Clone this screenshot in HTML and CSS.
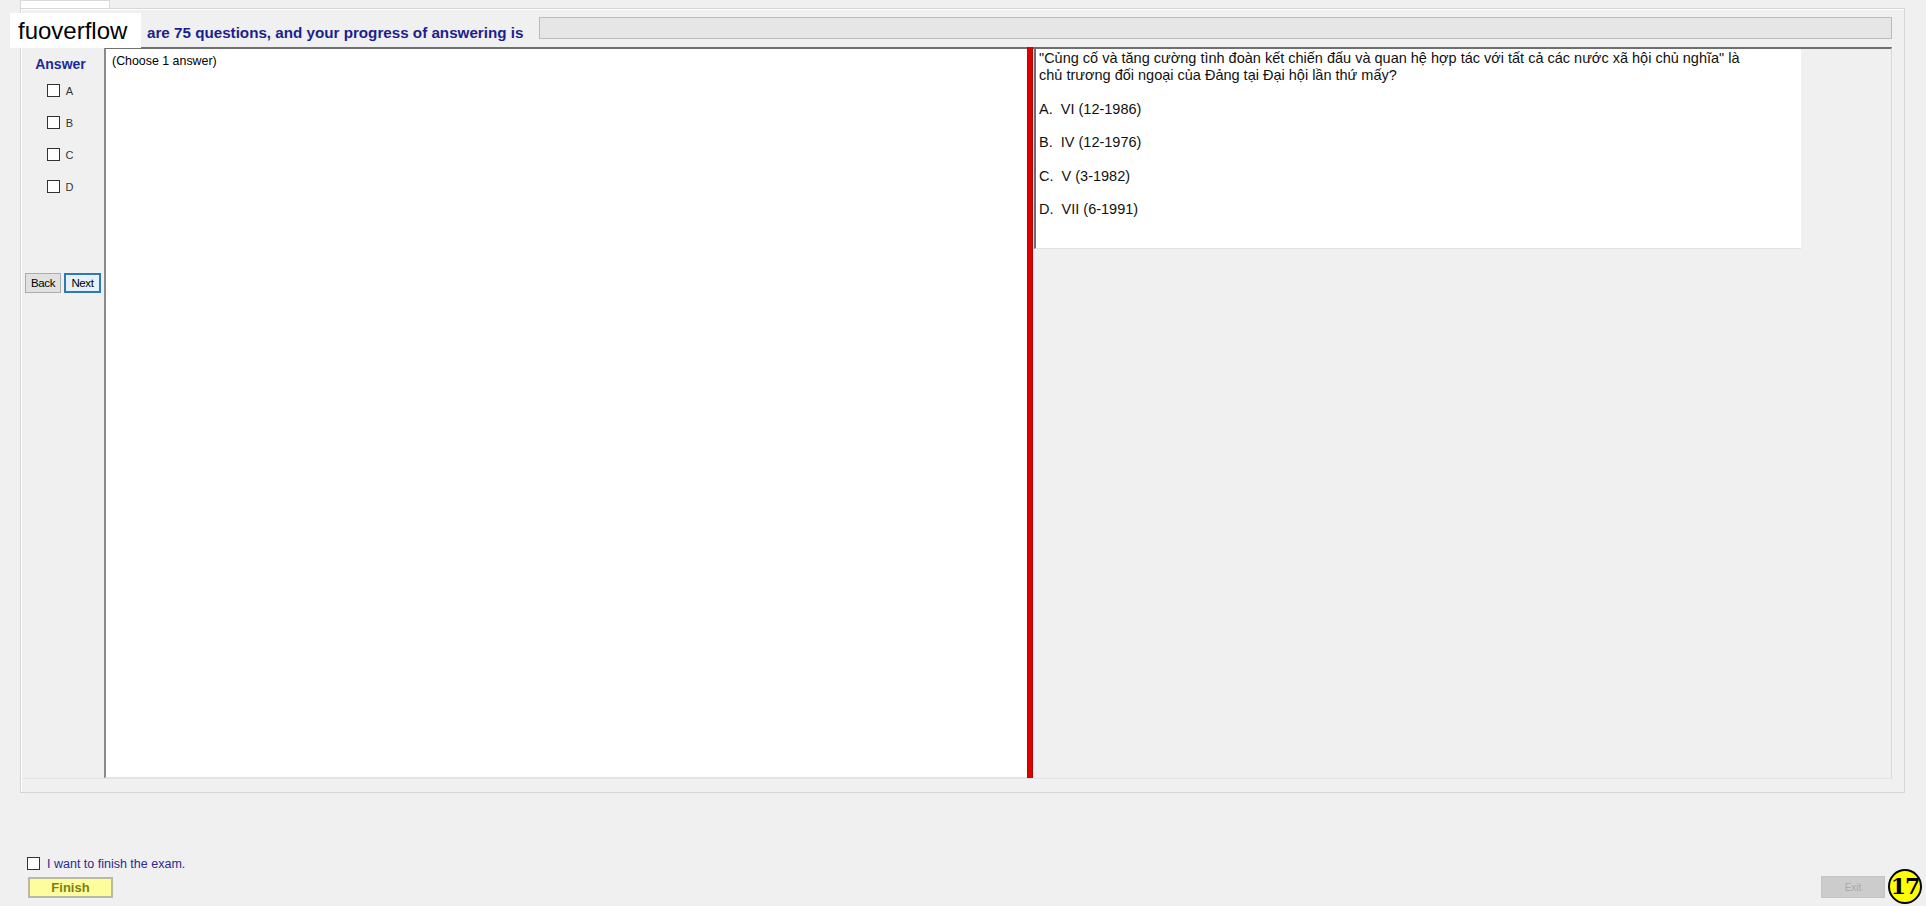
FILE: index.html
```html
<!DOCTYPE html>
<html>
<head>
<meta charset="utf-8">
<link rel="stylesheet" href="styles.css">
</head>
<body>
<div class="app">
  <div class="tabstrip"><div class="tab"></div></div>
  <div class="tabpage">
    <div class="header">
      <span class="count">are 75 questions, and your progress of answering is</span>
      <div class="progress"></div>
    </div>
    <div class="content">
      <div class="answer-col">
        <div class="answer-title">Answer</div>
        <label class="opt"><span class="box"></span>A</label>
        <label class="opt"><span class="box"></span>B</label>
        <label class="opt"><span class="box"></span>C</label>
        <label class="opt"><span class="box"></span>D</label>
        <div class="nav">
          <button class="btn">Back</button>
          <button class="btn focused">Next</button>
        </div>
      </div>
      <div class="left-pane">(Choose 1 answer)</div>
      <div class="splitter"></div>
      <div class="right-pane">
        <div class="question">
          <p class="q-text">"Củng cố và tăng cường tình đoàn kết chiến đấu và quan hệ hợp tác với tất cả các nước xã hội chủ nghĩa" là<br>chủ trương đối ngoại của Đảng tại Đại hội lần thứ mấy?</p>
          <p class="q-opt">A.&nbsp; VI (12-1986)</p>
          <p class="q-opt">B.&nbsp; IV (12-1976)</p>
          <p class="q-opt">C.&nbsp; V (3-1982)</p>
          <p class="q-opt">D.&nbsp; VII (6-1991)</p>
        </div>
      </div>
    </div>
  </div>
  <div class="footer">
    <div class="finish-group">
      <label class="finish-check"><span class="box"></span>I want to finish the exam.</label>
      <button class="finish-btn">Finish</button>
    </div>
    <button class="exit-btn">Exit</button>
  </div>
  <div class="logo">fuoverflow</div>
  <div class="badge">17</div>
</div>
</body>
</html>
```
FILE: styles.css
```css
* { box-sizing: border-box; }
html, body { margin: 0; padding: 0; }
body {
  background: #f0f0f0;
  font-family: "Liberation Sans", Arial, sans-serif;
  color: #000;
}
.app {
  position: relative;
  width: 1926px;
  height: 906px;
  overflow: hidden;
  background: #f0f0f0;
}
.tabstrip {
  height: 8px;
  padding-left: 20px;
}
.tab {
  width: 90px;
  height: 8px;
  background: #fff;
  border: 1px solid #d9d9d9;
  border-bottom: none;
}
.tabpage {
  margin-left: 20px;
  width: 1885px;
  height: 785px;
  border: 1px solid #d6d6d6;
  background: #f0f0f0;
  box-shadow: inset 1px 1px 0 #fff;
  padding: 0 12px 0 1px;
}
.header {
  height: 38px;
  display: flex;
  align-items: center;
  padding-left: 125px;
}
.count {
  font-weight: bold;
  font-size: 15.2px;
  color: #1c1f8f;
  white-space: nowrap;
  margin-top: 9px;
}
.progress {
  flex: 1;
  height: 22px;
  margin-left: 16px;
  background: #e6e6e6;
  border: 1px solid #bcbcbc;
}
.content {
  height: 732px;
  display: grid;
  grid-template-columns: 82px 923px 6px 1fr;
  border-bottom: 1px solid #e4e4e4;
}
.answer-col {
  display: flex;
  flex-direction: column;
  align-items: center;
  padding-top: 8px;
  border-top: 1px solid #e0e0e0;
}
.answer-title {
  font-weight: bold;
  font-size: 14px;
  color: #1b2a99;
  margin-left: -5px;
  height: 16px;
  line-height: 16px;
}
.opt {
  display: flex;
  align-items: center;
  height: 13px;
  margin-top: 19px;
  font-size: 11px;
  color: #333;
  margin-left: -6px;
}
.answer-title + .opt { margin-top: 12px; }
.box {
  display: inline-block;
  width: 13px;
  height: 13px;
  border: 1px solid #333;
  background: #fff;
  margin-right: 6px;
}
.nav {
  display: flex;
  gap: 3px;
  margin-top: 80px;
  align-self: flex-start;
  padding-left: 3px;
}
.btn {
  font-family: "Liberation Sans", Arial, sans-serif;
  font-size: 11.5px;
  height: 20px;
  width: 36px;
  padding: 0;
  background: #e1e1e1;
  border: 1px solid #adadad;
  color: #000;
  letter-spacing: -0.4px;
}
.btn.focused {
  width: 37px;
  border: 2px solid #2f78b5;
  background: #e5f1fb;
}
.left-pane {
  background: #fff;
  border-top: 2px solid #6f6f6f;
  border-left: 2px solid #8a8a8a;
  padding: 5px 0 0 6px;
  font-size: 12.4px;
  line-height: 14px;
  border-bottom: 1px solid #e3e3e3;
}
.splitter {
  background: #e10000;
  border-left: 1px solid #c80000;
  border-right: 1px solid #b00000;
  height: 731px;
}
.right-pane {
  border-top: 2px solid #6f6f6f;
  border-right: 1px solid #d8d8d8;
  padding-left: 1px;
}
.question {
  width: 767px;
  height: 200px;
  background: #fff;
  border-left: 2px solid #6d6d6d;
  border-bottom: 1px solid #e3e3e3;
  padding: 1px 0 0 3px;
  font-size: 14.5px;
  line-height: 17px;
  color: #111;
}
.question p { margin: 0; }
.q-opt { margin-top: 16.5px !important; }
.footer {
  height: 113px;
  display: flex;
  justify-content: space-between;
  align-items: flex-end;
  padding: 0 41px 8px 27px;
}
.finish-group {
  display: flex;
  flex-direction: column;
  align-items: flex-start;
}
.finish-check {
  display: flex;
  align-items: center;
  font-size: 12.5px;
  color: #2a2a90;
  height: 13px;
}
.finish-check .box { margin-right: 7px; }
.finish-btn {
  margin-top: 7px;
  margin-left: 1px;
  width: 85px;
  height: 21px;
  padding: 0;
  background: #fdfd9d;
  border: 2px solid #b9b9a4;
  font-family: "Liberation Sans", Arial, sans-serif;
  font-weight: bold;
  font-size: 13px;
  color: #7d7d10;
}
.exit-btn {
  width: 64px;
  height: 22px;
  padding: 0;
  background: #cccccc;
  border: 1px solid #c4c4c4;
  font-family: "Liberation Sans", Arial, sans-serif;
  font-size: 10px;
  color: #a8a8a8;
}
.logo {
  position: absolute;
  left: 10px;
  top: 13px;
  width: 131px;
  height: 35px;
  background: #fff;
  font-size: 24px;
  line-height: 35px;
  padding-left: 8px;
  color: #000;
}
.badge {
  position: absolute;
  left: 1888px;
  top: 869px;
  width: 34px;
  height: 35px;
  border-radius: 50%;
  background: #ffff00;
  border: 2px solid #000;
  font-weight: bold;
  font-size: 22px;
  line-height: 31px;
  text-align: center;
  color: #000;
  font-family: "DejaVu Serif", serif;
  letter-spacing: -1px;
}
```
